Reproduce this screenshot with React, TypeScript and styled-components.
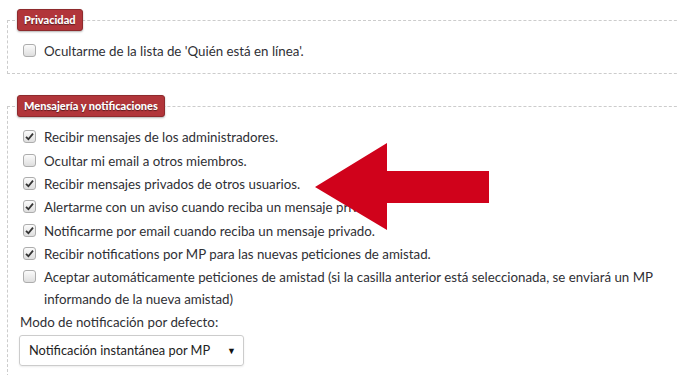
import React from "react";
import styled, { createGlobalStyle } from "styled-components";

const GlobalStyle = createGlobalStyle`
  html, body {
    margin: 0;
    padding: 0;
    background: #fff;
    overflow: hidden;
  }
  body {
    font-family: Lato, "Open Sans", sans-serif;
    color: #2f3035;
  }
`;

const Page = styled.div`
  position: relative;
  width: 678px;
  height: 375px;
  padding-top: 9px;
  box-sizing: border-box;
  overflow: hidden;
`;

const Section = styled.fieldset<{ $gap?: number }>`
  margin: 0 0 ${(p) => p.$gap ?? 0}px 7px;
  width: 720px;
  box-sizing: border-box;
  border: 1px dashed #ccc;
  border-right: none;
  padding: 9px 0 10px 11px;
`;

const Legend = styled.legend`
  margin-left: -2px;
  padding: 0 6px;
  height: 22px;
  line-height: 20px;
  box-sizing: border-box;
  background: #b1353a;
  border: 1px solid #8e2a2d;
  border-radius: 3px;
  box-shadow: 0 1px 2px rgba(0, 0, 0, 0.3);
  color: #fff;
  font-size: 11px;
  font-weight: 900;
  text-shadow: 0 1px 1px rgba(0, 0, 0, 0.5);
`;

const Row = styled.label`
  display: flex;
  align-items: flex-start;
  gap: 8px;
  padding-left: 4px;
  margin-bottom: 1.33px;
  font-size: 13.3px;
  line-height: 22px;
  width: 658px;
  box-sizing: border-box;
`;

const Box = styled.span`
  flex: none;
  width: 13px;
  height: 13px;
  margin-top: 4px;
  box-sizing: border-box;
  border: 1px solid #adadad;
  border-radius: 3px;
  background: linear-gradient(#fbfbfb, #dedede);
  display: flex;
  align-items: center;
  justify-content: center;
`;

const Label = styled.div`
  font-size: 13.3px;
  line-height: 20px;
  padding-left: 1px;
`;

const Select = styled.div`
  margin-top: 3px;
  width: 225px;
  height: 31px;
  box-sizing: border-box;
  border: 1px solid #ccc;
  border-radius: 3px;
  box-shadow: 0 1px 2px rgba(0, 0, 0, 0.08);
  display: flex;
  align-items: center;
  justify-content: space-between;
  padding: 0 7px 0 9px;
  font-size: 12.8px;
  white-space: nowrap;
  color: #222;
`;

const Caret = styled.span`
  font-size: 9px;
  color: #111;
`;

const Arrow = styled.svg`
  position: absolute;
  left: 0;
  top: 0;
  pointer-events: none;
`;

const Check = ({ checked }: { checked: boolean }) => (
  <Box>
    {checked && (
      <svg width="9" height="9" viewBox="0 0 9 9">
        <path d="M1 4.8 L3.4 7.2 L8 1.6" fill="none" stroke="#333" strokeWidth="1.8" />
      </svg>
    )}
  </Box>
);

const options: [boolean, string][] = [
  [true, "Recibir mensajes de los administradores."],
  [false, "Ocultar mi email a otros miembros."],
  [true, "Recibir mensajes privados de otros usuarios."],
  [true, "Alertarme con un aviso cuando reciba un mensaje privado."],
  [true, "Notificarme por email cuando reciba un mensaje privado."],
  [true, "Recibir notifications por MP para las nuevas peticiones de amistad."],
  [
    false,
    "Aceptar automáticamente peticiones de amistad (si la casilla anterior está seleccionada, se enviará un MP informando de la nueva amistad)",
  ],
];

export default function App() {
  return (
    <Page>
      <GlobalStyle />
      <Section $gap={21}>
        <Legend>Privacidad</Legend>
        <Row>
          <Check checked={false} />
          Ocultarme de la lista de 'Quién está en línea'.
        </Row>
      </Section>
      <Section>
        <Legend>Mensajería y notificaciones</Legend>
        {options.map(([c, t]) => (
          <Row key={t}>
            <Check checked={c} />
            <span>{t}</span>
          </Row>
        ))}
        <Label>Modo de notificación por defecto:</Label>
        <Select>
          Notificación instantánea por MP
          <Caret>▼</Caret>
        </Select>
      </Section>
      <Arrow width="678" height="375">
        <polygon
          points="315,187 387,143 387,171 489,171 489,203 387,203 387,230"
          fill="#d0021b"
        />
      </Arrow>
    </Page>
  );
}
